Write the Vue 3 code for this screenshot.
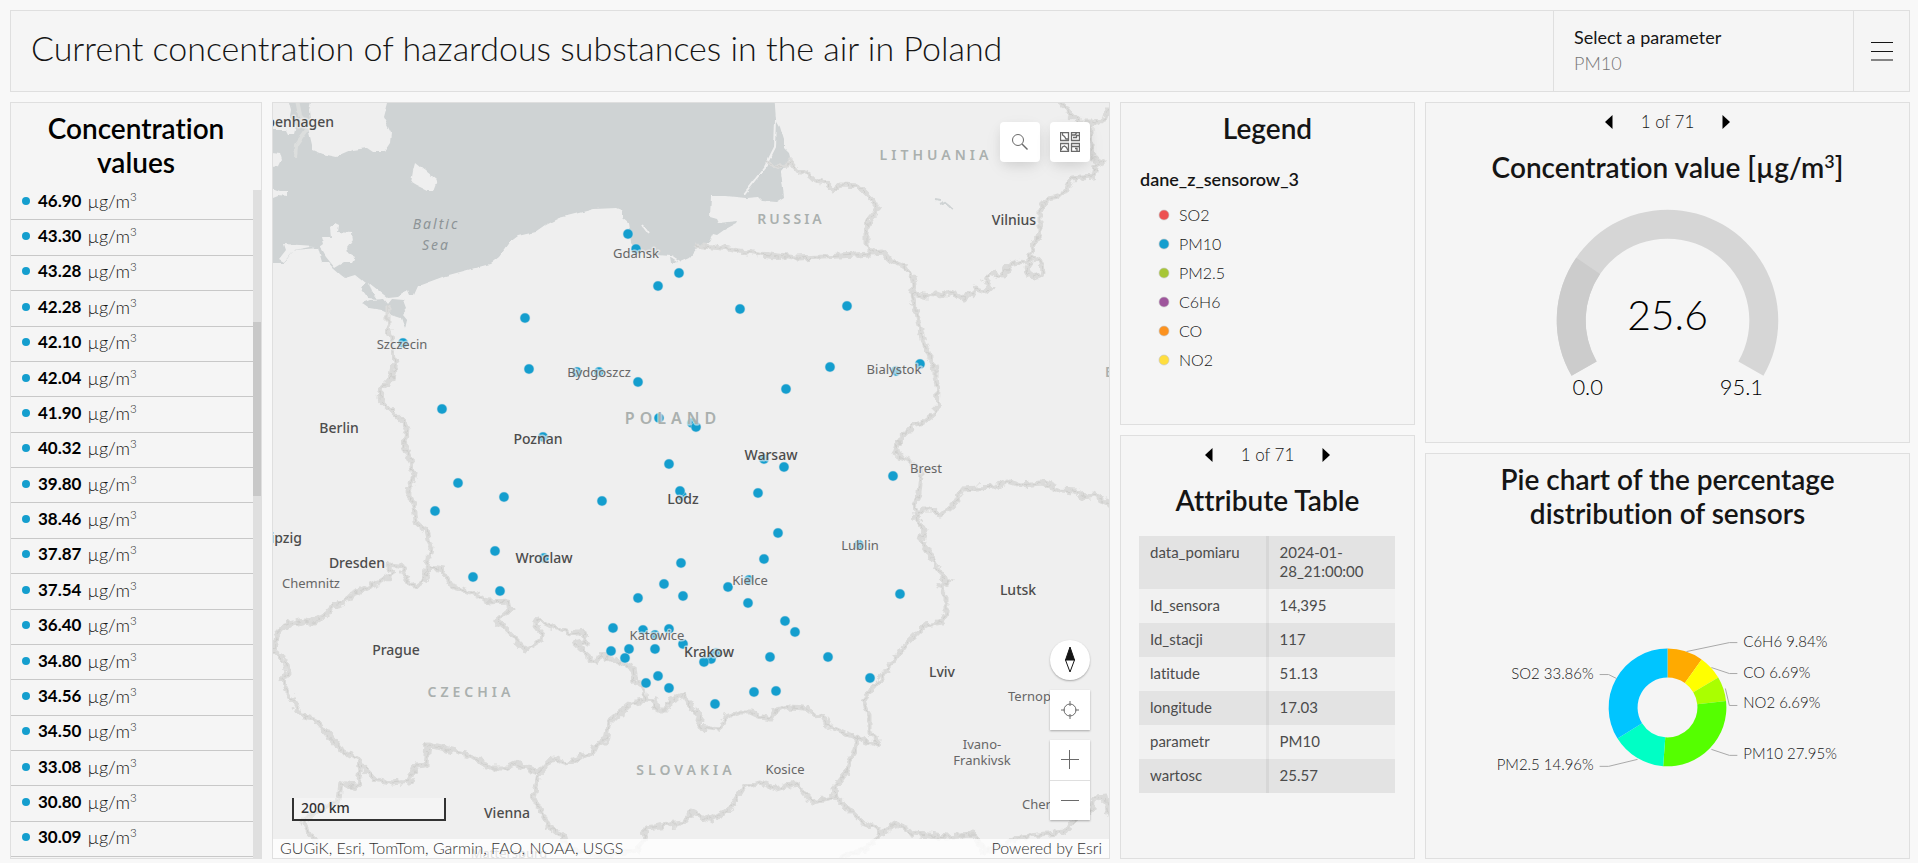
<script setup>
import { ref, computed } from 'vue'

const parameter = ref('PM10')
const parameters = ['SO2', 'PM10', 'PM2.5', 'C6H6', 'CO', 'NO2']

const values = [
  '46.90', '43.30', '43.28', '42.28', '42.10', '42.04', '41.90', '40.32', '39.80', '38.46',
  '37.87', '37.54', '36.40', '34.80', '34.56', '34.50', '33.08', '30.80', '30.09',
]

const legend = [
  { name: 'SO2', color: '#ed5151' },
  { name: 'PM10', color: '#149ece' },
  { name: 'PM2.5', color: '#a7c636' },
  { name: 'C6H6', color: '#9e559c' },
  { name: 'CO', color: '#fc921f' },
  { name: 'NO2', color: '#ffde3e' },
]

const attributes = [
  ['data_pomiaru', '2024-01-28_21:00:00'],
  ['Id_sensora', '14,395'],
  ['Id_stacji', '117'],
  ['latitude', '51.13'],
  ['longitude', '17.03'],
  ['parametr', 'PM10'],
  ['wartosc', '25.57'],
]

/* ring segment between two angles, measured clockwise from the top */
function ring(cx, cy, outer, inner, from, to) {
  const at = (r, deg) => {
    const a = ((deg - 90) * Math.PI) / 180
    return `${(cx + r * Math.cos(a)).toFixed(2)} ${(cy + r * Math.sin(a)).toFixed(2)}`
  }
  const big = to - from > 180 ? 1 : 0
  return `M${at(outer, from)}A${outer} ${outer} 0 ${big} 1 ${at(outer, to)}L${at(inner, to)}A${inner} ${inner} 0 ${big} 0 ${at(inner, from)}Z`
}

const gaugeSplit = -120 + (25.57 / 95.1) * 240
const gauge = [
  { d: ring(242, 134, 111, 82, -120, 120), color: '#d6d6d6' },
  { d: ring(242, 134, 111, 82, -120, gaugeSplit), color: '#cccccc' },
]

const shares = [
  { name: 'C6H6', share: 9.84, color: '#ffaa00', line: '261,121 304,112 312,112', x: 318, y: 116, anchor: 'start' },
  { name: 'CO', share: 6.69, color: '#ffff00', line: '286,137 304,143 312,143', x: 318, y: 147, anchor: 'start' },
  { name: 'NO2', share: 6.69, color: '#aaff00', line: '300,158 304,175 312,175', x: 318, y: 178, anchor: 'start' },
  { name: 'PM10', share: 27.95, color: '#55ff00', line: '286,219 304,225 312,225', x: 318, y: 229, anchor: 'start' },
  { name: 'PM2.5', share: 14.96, color: '#00ffc5', line: '212,229 183,236 174,236', x: 168, y: 240, anchor: 'end' },
  { name: 'SO2', share: 33.86, color: '#00c5ff', line: '191,148 183,144 174,144', x: 168, y: 148, anchor: 'end' },
]
const slices = computed(() => {
  const total = shares.reduce((s, p) => s + p.share, 0)
  let angle = 0
  return shares.map((p) => {
    const from = angle
    angle += (p.share / total) * 360
    return { ...p, d: ring(242, 177, 59, 30, from, angle) }
  })
})

const stations = [
  [628, 234], [636, 249], [679, 273], [658, 286], [740, 309], [847, 306], [830, 367], [920, 364],
  [896, 371], [577, 372], [599, 372], [638, 382], [786, 389], [659, 418], [692, 423], [696, 427],
  [669, 464], [764, 459], [784, 467], [682, 496], [680, 491], [758, 493], [602, 501], [893, 476],
  [778, 533], [859, 545], [764, 559], [681, 563], [749, 580], [664, 584], [728, 587], [638, 598],
  [683, 596], [748, 603], [900, 594], [785, 621], [795, 632], [613, 628], [643, 630], [669, 629],
  [655, 635], [611, 651], [629, 649], [625, 658], [655, 649], [683, 644], [716, 653], [711, 659],
  [704, 662], [770, 657], [828, 657], [870, 678], [658, 676], [646, 683], [669, 688], [754, 692],
  [776, 691], [715, 704], [525, 318], [403, 343], [529, 369], [442, 409], [543, 437], [458, 483],
  [504, 497], [435, 511], [495, 551], [544, 558], [473, 577], [500, 591],
]

const labels = [
  ['Copenhagen', 334, 127, 'city end'], ['Szczecin', 402, 349, 'town'], ['Bydgoszcz', 599, 377, 'town'],
  ['Berlin', 339, 433, 'city'], ['Poznan', 538, 444, 'city'], ['Leipzig', 302, 543, 'city end'],
  ['Dresden', 357, 568, 'city'], ['Chemnitz', 311, 588, 'town'], ['Wroclaw', 544, 563, 'city'],
  ['Prague', 396, 655, 'city'], ['Vienna', 507, 818, 'city'], ['Mattersburg', 509, 858, 'town'],
  ['Vilnius', 1014, 225, 'city'], ['Gdansk', 636, 258, 'town'], ['Bialystok', 894, 374, 'town'],
  ['Warsaw', 771, 460, 'city'], ['Brest', 926, 473, 'town'], ['Lodz', 683, 504, 'city'],
  ['Lublin', 860, 550, 'town'], ['Kielce', 750, 585, 'town'], ['Katowice', 657, 640, 'town'],
  ['Krakow', 709, 657, 'city'], ['Lutsk', 1018, 595, 'city'], ['Lviv', 942, 677, 'city'],
  ['Ternopil', 1008, 701, 'town start'], ['Ivano-', 982, 749, 'town'], ['Frankivsk', 982, 765, 'town'],
  ['Kosice', 785, 774, 'town'], ['Chernivtsi', 1022, 809, 'town start'],
  ['CZECHIA', 471, 697, 'country'], ['LITHUANIA', 936, 160, 'country'], ['RUSSIA', 791, 224, 'country tight'],
  ['POLAND', 673, 424, 'country home'], ['SLOVAKIA', 686, 775, 'country'], ['B', 1105, 377, 'country start'],
  ['Baltic', 436, 229, 'sea'], ['Sea', 436, 250, 'sea'],
]

const land = [
  'M311 102H387L383 117L391 133L390 143L384 152L373 152L367 148L353 150L337 157L322 154L312 150L312 145L308 128L310 120L309 110Z',
  'M272 102H289L291 110L290 116L296 126L294 134L288 134L286 130L272 130Z',
  'M272 152L280 153L282 160L279 166L272 167Z',
  'M272 188L280 191L288 191L288 196L277 195L272 197Z',
  'M415 162L426 171L437 180L433 191L428 191L416 185L411 182L413 170Z',
  'M335 223L339 225L338 232L352 233L353 240L347 248L348 253L355 257L352 262L345 262L335 268L326 257L320 247L324 244L322 237L331 237L330 227Z',
  'M284 244L315 246L294 250L284 262L279 259L286 250Z',
]

const borders = [
  'M694 245L721 248L760 254L796 258L824 257L871 254',
  'M767 163L776 167L788 166L791 161L800 172L806 172L815 180L826 183L832 189L842 185L858 186L862 190L874 202L877 210L869 220L866 233L866 245L872 253L883 252L890 260L905 266L912 277L914 285L912 293',
  'M912 293L928 297L937 293L942 295L951 292L964 299L976 289L985 292L990 287L985 279L994 273L1003 276L1010 264L1028 260L1033 247L1040 232L1040 212L1047 198L1058 196L1067 190L1071 178L1094 176L1096 167L1103 162L1092 158L1090 133L1090 122',
  'M1062 102L1069 113L1078 122L1092 122L1098 123L1105 118L1109 108',
  'M1028 260L1034 258L1042 262L1043 273L1033 277L1027 272L1030 262',
  'M912 293L917 317L924 342L935 370L935 378L938 390L937 412L924 422L912 426L901 438L895 455L912 461L921 475L919 493L915 505L917 520L924 530L921 540L933 560L942 577L949 582L939 586L946 597L946 613L942 622L926 625L905 645L883 675L864 700L869 715L869 732L878 740L876 746L858 738',
  'M917 517L921 510L933 510L940 517L956 503L962 489L994 487L1008 481L1021 485L1042 483L1060 490L1076 491L1083 497L1094 495L1110 504',
  'M858 738L846 734L830 727L824 717L815 715L805 708L789 707L776 710L771 719L762 717L751 712L739 712L726 717L719 729L699 727L701 715L690 707L685 694L671 700L667 710L656 710L655 701L646 700',
  'M646 700L644 688L635 682L633 668L621 663L603 655L594 661L576 645L587 642L583 632L573 634L551 626L537 619L535 626L543 635L541 640L526 650L508 631L497 621L510 610L508 601L488 602L477 594L463 590L451 586L443 570L431 568L424 581L416 586L408 581L400 566L388 565L394 573L382 581L351 595L345 603L333 606L326 615L314 622L304 620L286 625L276 636L274 651L286 660L288 670L282 680L292 700L302 716L314 718L339 748L359 760L361 771',
  'M361 765L377 781L392 783L410 781L416 766L426 765L428 745L449 750L469 755L490 768L506 768L516 763L539 773',
  'M361 771L357 788L341 783L339 800L318 812L302 820L310 835L322 848',
  'M539 773L553 758L567 763L592 753L596 745L606 740L610 721L631 703L646 700',
  'M539 773L534 798L545 818L551 830L563 835L566 848L600 856L638 850L644 837L646 828L683 823L692 812L710 820L731 808L744 787L760 782L776 789L796 783L812 802L835 798',
  'M858 738L847 772L835 787L836 797L862 822L878 828L881 835L896 823L912 833L946 837L974 835L984 852L1021 837L1065 832L1074 820L1092 810L1094 798L1105 797L1110 818',
  'M881 835L863 850L839 858',
  'M388 306L388 325L395 362L392 378L381 390L380 399L391 410L405 424L408 430L404 446L410 460L414 475L408 492L414 505L416 522L427 530L431 548L427 566L424 581',
]
</script>

<template>
  <div class="dashboard">
    <header class="panel header">
      <h1 class="headline">Current concentration of hazardous substances in the air in Poland</h1>
      <div class="selector">
        <label for="parameter">Select a parameter</label>
        <select id="parameter" v-model="parameter">
          <option v-for="p in parameters" :key="p">{{ p }}</option>
        </select>
      </div>
      <button class="menu" aria-label="Menu">
        <svg width="24" height="20" viewBox="0 0 24 20" stroke="#151515" fill="none">
          <path d="M1 1.5H23M1 10.5H23M1 19H23" />
        </svg>
      </button>
    </header>

    <main class="columns">
      <section class="panel readings">
        <h2 class="title strong">Concentration values</h2>
        <div class="scroller">
          <ul class="rows">
            <li v-for="v in values" :key="v">
              <span class="dot"></span>
              <b>{{ v }}</b>
              <span class="unit">µg/m<sup>3</sup></span>
            </li>
          </ul>
          <div class="track"><div class="thumb"></div></div>
        </div>
      </section>

      <section class="panel map">
        <svg class="canvas" viewBox="273 103 836 755" preserveAspectRatio="xMidYMid slice">
          <defs>
            <filter id="rough" x="-5%" y="-5%" width="110%" height="110%">
              <feTurbulence type="fractalNoise" baseFrequency="0.14" numOctaves="2" seed="4" />
              <feDisplacementMap in="SourceGraphic" scale="9" xChannelSelector="R" yChannelSelector="G" />
            </filter>
            <filter id="coast" x="-5%" y="-5%" width="110%" height="110%">
              <feTurbulence type="fractalNoise" baseFrequency="0.1" numOctaves="2" seed="8" />
              <feDisplacementMap in="SourceGraphic" scale="4" xChannelSelector="R" yChannelSelector="G" />
            </filter>
          </defs>
          <rect x="253" y="83" width="876" height="795" fill="#efefef" />
          <g filter="url(#coast)">
            <path
              fill="#cfd3d4"
              d="M262 92H774L776 120L780 127L784 140L784 148L789 153L790 157L787 165L781 172L784 197L776 202L762 201L758 197L746 198L726 196L711 196L710 217L717 219L719 223L738 221L737 223L724 230L717 235L713 234L709 242L697 248L689 258L680 262L671 263L670 256L656 255L637 251L631 242L628 223L622 218L622 210L617 208L594 209L575 214L559 218L545 225L535 232L518 236L510 242L499 257L490 264L445 276L418 286L414 295L410 295L408 290L398 297L388 298L369 283L372 292L377 299L368 298L361 288L365 283L355 275L345 278L341 275L333 268L328 262L322 262L318 248L294 250L284 263L262 263Z"
            />
            <path fill="#cfd3d4" d="M362 303L370 300L384 299L388 304L392 299L404 300L407 308L402 314L407 320L405 329L401 318L392 315L382 310L369 308Z" />
            <path d="M940 204L945 202L949 205L953 209M941 200L935 199" stroke="#cfd3d4" stroke-width="2" fill="none" />
            <path v-for="d in land" :key="d" :d="d" fill="#efefef" />
            <path d="M776 120L775 147L765 167L744 194" stroke="#efefef" stroke-width="2" fill="none" />
            <path d="M642 225L648 233M671 256L680 262" stroke="#efefef" stroke-width="2" fill="none" />
            <path d="M297 100L300 115L307 130L296 145L295 158" stroke="#dcdedd" stroke-width="4" fill="none" />
          </g>
          <g filter="url(#rough)" fill="none" stroke-linejoin="round">
            <path v-for="d in borders" :key="d" :d="d" stroke="#dbdbda" stroke-width="5" />
            <path v-for="d in borders" :key="d" :d="d" stroke="#cfcfcd" stroke-width="1" stroke-dasharray="7 3" />
          </g>
          <circle v-for="(s, i) in stations" :key="i" :cx="s[0]" :cy="s[1]" r="5" class="station" />
          <text v-for="l in labels" :key="l[0]" :x="l[1]" :y="l[2]" :class="l[3]">{{ l[0] }}</text>
        </svg>

        <div class="tools top">
          <button class="tool round" aria-label="Search">
            <svg width="18" height="18" viewBox="0 0 18 18" fill="none" stroke="#6a6a6a">
              <circle cx="7" cy="7" r="5.5" /><path d="M11 11L16.5 16.5" stroke-width="1.4" />
            </svg>
          </button>
          <button class="tool round" aria-label="Basemap gallery">
            <svg width="20" height="20" viewBox="0 0 20 20" fill="none" stroke="#6a6a6a" stroke-width="1.3">
              <path d="M.5.5h8v8h-8zM11.5.5h8v8h-8zM.5 11.5h8v8h-8zM11.5 11.5h8v8h-8z" />
              <path d="M2.500 1v2l2 1.500 1.500 2.500h2M12 3h3l1.500-2M13 5.500h3.500v-2h2.500M1 18l1.500-3 2-1 2 1.500 1.500 3M12 14.500h7M15 16.500h2v3" />
            </svg>
          </button>
        </div>

        <div class="tools bottom">
          <button class="tool compass" aria-label="Reset compass">
            <svg width="12" height="28" viewBox="0 0 12 28">
              <path d="M6 1L10.500 14H1.500Z" fill="#151515" stroke="#151515" />
              <path d="M1.500 14H10.500L6 26Z" fill="#fff" stroke="#151515" />
            </svg>
          </button>
          <button class="tool" aria-label="Find my location">
            <svg width="20" height="20" viewBox="0 0 20 20" fill="none" stroke="#6a6a6a">
              <circle cx="10" cy="10" r="6" /><path d="M10 1V6M10 14V19M1 10H5M15 10H19" />
            </svg>
          </button>
          <div class="zoom">
            <button class="tool" aria-label="Zoom in">
              <svg width="20" height="20" viewBox="0 0 20 20" stroke="#6a6a6a"><path d="M1 9.500H19M9.500 0V19" /></svg>
            </button>
            <button class="tool" aria-label="Zoom out">
              <svg width="20" height="20" viewBox="0 0 20 20" stroke="#6a6a6a"><path d="M1 9.500H19" /></svg>
            </button>
          </div>
        </div>

        <div class="scale">200 km</div>
        <div class="attribution">
          <span>GUGiK, Esri, TomTom, Garmin, FAO, NOAA, USGS</span>
          <span>Powered by <a href="#">Esri</a></span>
        </div>
      </section>

      <div class="stack middle">
        <section class="panel">
          <h2 class="title">Legend</h2>
          <h3 class="layer">dane_z_sensorow_3</h3>
          <ul class="legend">
            <li v-for="l in legend" :key="l.name">
              <svg width="12" height="12" viewBox="0 0 12 12"><circle cx="6" cy="6" r="5" :fill="l.color" stroke="#c4c4c4" stroke-opacity=".6" /></svg>
              {{ l.name }}
            </li>
          </ul>
        </section>
        <section class="panel">
          <nav class="pager">
            <button aria-label="Previous"><svg width="8" height="14" viewBox="0 0 8 14"><path d="M7.500 0V14L0 7Z" /></svg></button>
            <span>1 of 71</span>
            <button aria-label="Next"><svg width="8" height="14" viewBox="0 0 8 14"><path d="M.5 0V14L8 7Z" /></svg></button>
          </nav>
          <h2 class="title spaced">Attribute Table</h2>
          <table class="attributes">
            <tbody>
              <tr v-for="a in attributes" :key="a[0]">
                <th scope="row">{{ a[0] }}</th>
                <td>{{ a[1] }}</td>
              </tr>
            </tbody>
          </table>
        </section>
      </div>

      <div class="stack right">
        <section class="panel">
          <nav class="pager">
            <button aria-label="Previous"><svg width="8" height="14" viewBox="0 0 8 14"><path d="M7.500 0V14L0 7Z" /></svg></button>
            <span>1 of 71</span>
            <button aria-label="Next"><svg width="8" height="14" viewBox="0 0 8 14"><path d="M.5 0V14L8 7Z" /></svg></button>
          </nav>
          <h2 class="title spaced">Concentration value [µg/m<sup>3</sup>]</h2>
          <svg class="chart" viewBox="0 0 484 253">
            <path v-for="g in gauge" :key="g.color" :d="g.d" :fill="g.color" />
            <text class="reading" x="242" y="144">25.6</text>
            <text class="bound" x="162" y="209">0.0</text>
            <text class="bound" x="316" y="209">95.1</text>
          </svg>
        </section>
        <section class="panel">
          <h2 class="title">Pie chart of the percentage distribution of sensors</h2>
          <svg class="chart" viewBox="0 0 484 327">
            <path v-for="s in slices" :key="s.name" :d="s.d" :fill="s.color" />
            <g v-for="s in slices" :key="s.name">
              <polyline :points="s.line" fill="none" stroke="#a9a9a9" />
              <text class="share" :x="s.x" :y="s.y" :text-anchor="s.anchor">{{ s.name }} {{ s.share }}%</text>
            </g>
          </svg>
        </section>
      </div>
    </main>
  </div>
</template>

<style>
body {
  margin: 0;
  background: #f8f8f8;
}
</style>

<style scoped>
.dashboard {
  box-sizing: border-box;
  height: 100vh;
  padding: 10px 8px 4px 10px;
  display: flex;
  flex-direction: column;
  gap: 10px;
  font-family: Lato, "Liberation Sans", sans-serif;
  font-weight: 300;
  font-variant-ligatures: none;
  color: #151515;
}
.dashboard * {
  box-sizing: border-box;
}
button,
select {
  font: inherit;
  color: inherit;
  background: none;
  border: 0;
  padding: 0;
  margin: 0;
  border-radius: 0;
}
ul {
  list-style: none;
  margin: 0;
  padding: 0;
}
.panel {
  background: #f5f5f5;
  border: 1px solid #dfdfdf;
  min-width: 0;
  min-height: 0;
  display: flex;
  flex-direction: column;
  overflow: hidden;
}
.header {
  flex-direction: row;
  flex: none;
}
.headline {
  flex: 1;
  margin: 0;
  padding: 17px 20px 23px;
  font-size: 34px;
  line-height: 40px;
  font-weight: 300;
}
.selector {
  width: 300px;
  border-left: 1px solid #dfdfdf;
  padding: 13px 20px;
  display: flex;
  flex-direction: column;
  align-items: flex-start;
  font-size: 18px;
  line-height: 26px;
}
.selector label {
  font-weight: 400;
}
.selector select {
  appearance: none;
  width: 100%;
  height: 26px;
  color: #757575;
}
.menu {
  width: 56px;
  border-left: 1px solid #dfdfdf;
  display: grid;
  place-items: center;
}
.columns {
  flex: 1;
  min-height: 0;
  display: grid;
  grid-template-columns: 252fr 838fr 295fr 485fr;
  gap: 10px;
}
.stack {
  display: grid;
  gap: 10px;
  min-height: 0;
  min-width: 0;
}
.middle {
  grid-template-rows: 323fr 424fr;
}
.right {
  grid-template-rows: 341fr 406fr;
}
.title {
  margin: 0;
  padding: 8px 30px 0;
  font-size: 28px;
  line-height: 34px;
  font-weight: 600;
  text-align: center;
}
.title.spaced {
  padding: 0 10px;
}
.strong {
  color: #000;
}
sup {
  font-size: 64%;
  line-height: 0;
  vertical-align: super;
}

.scroller {
  flex: 1;
  min-height: 0;
  display: flex;
  padding-top: 6px;
}
.rows {
  flex: 1;
  display: flex;
  flex-direction: column;
  padding-bottom: 1px;
}
.rows li {
  flex: 1;
  min-height: 0;
  border-bottom: 1px solid #c8c8c8;
  display: flex;
  align-items: center;
  padding: 0 0 3px 11px;
  font-size: 17px;
  line-height: 24px;
}
.rows b {
  font-weight: 700;
  color: #000;
  margin: 0 6px 0 8px;
}
.unit {
  font-size: 18px;
}
.dot {
  width: 8px;
  height: 8px;
  border-radius: 50%;
  background: #149ece;
}
.track {
  width: 8px;
  margin-top: 5px;
  background: #dfdfdf;
}
.thumb {
  height: 26%;
  margin-top: 132px;
  background: #c8c8c8;
}

.map {
  position: relative;
}
.canvas {
  position: absolute;
  inset: 0;
  width: 100%;
  height: 100%;
}
.station {
  fill: #149ece;
  stroke: #c4dbe4;
  stroke-width: 0.5;
}
.canvas text {
  font-family: "Noto Sans", sans-serif;
  text-anchor: middle;
  paint-order: stroke;
  stroke: #efefef;
  stroke-opacity: 0.65;
  stroke-width: 3px;
  stroke-linejoin: round;
}
.canvas .city {
  font-size: 14px;
  font-weight: 500;
  fill: #4c4c4c;
}
.canvas .town {
  font-size: 13px;
  font-weight: 400;
  fill: #666;
}
.canvas .country {
  font-size: 14px;
  font-weight: 600;
  letter-spacing: 4px;
  fill: #aab0ae;
}
.canvas .tight {
  letter-spacing: 3px;
}
.canvas .home {
  font-size: 16px;
  letter-spacing: 5px;
}
.canvas .sea {
  font-size: 14px;
  font-style: italic;
  letter-spacing: 2px;
  font-weight: 400;
  fill: #8d9497;
  stroke: #cfd3d4;
}
.canvas .end {
  text-anchor: end;
}
.canvas .start {
  text-anchor: start;
}
.tools {
  position: absolute;
  right: 19px;
  display: flex;
  gap: 10px;
}
.tools.top {
  top: 19px;
}
.tools.bottom {
  bottom: 38px;
  flex-direction: column;
}
.tool {
  width: 40px;
  height: 40px;
  background: #fff;
  display: grid;
  place-items: center;
  box-shadow: 0 1px 2px rgba(0, 0, 0, 0.3);
}
.tool.round {
  border-radius: 4px;
  box-shadow: 0 6px 20px -4px rgba(0, 0, 0, 0.1), 0 4px 12px -2px rgba(0, 0, 0, 0.08);
}
.tool.compass {
  border-radius: 50%;
}
.zoom {
  box-shadow: 0 1px 2px rgba(0, 0, 0, 0.3);
}
.zoom .tool {
  box-shadow: none;
}
.zoom .tool + .tool {
  border-top: 1px solid #dfdfdf;
}
.scale {
  position: absolute;
  left: 19px;
  bottom: 37px;
  width: 154px;
  height: 23px;
  padding-left: 7px;
  border: solid #323232;
  border-width: 0 2px 2px;
  background: rgba(255, 255, 255, 0.33);
  color: #323232;
  font: 500 14px/20px "Noto Sans", sans-serif;
}
.attribution {
  position: absolute;
  left: 0;
  right: 0;
  bottom: 0;
  display: flex;
  justify-content: space-between;
  padding: 0 7px 2px;
  font-size: 16px;
  line-height: 17px;
  color: #323232;
  background: rgba(255, 255, 255, 0.8);
}
.attribution a {
  color: inherit;
  text-decoration: none;
}

.layer {
  margin: 22px 19px 0;
  font-size: 18px;
  line-height: 24px;
  font-weight: 600;
}
.legend {
  padding: 9px 0 0 37px;
  font-size: 16px;
  line-height: 29px;
}
.legend li {
  display: flex;
  align-items: center;
  gap: 9px;
}
.pager {
  display: flex;
  align-items: center;
  justify-content: center;
  gap: 28px;
  padding: 7px 0 16px;
  font-size: 17px;
  line-height: 24px;
}
.pager button {
  display: flex;
}
.attributes {
  margin: 19px 19px 0 18px;
  border-collapse: collapse;
  table-layout: fixed;
  font-size: 15px;
  line-height: 19px;
  color: #4c4c4c;
}
.attributes th,
.attributes td {
  padding: 7px 10px 8px 11px;
  text-align: left;
  vertical-align: top;
  font-weight: 400;
  width: 50%;
}
.attributes th {
  border-right: 3px solid #e5e5e5;
}
.attributes tr {
  background: #f1f1f1;
}
.attributes tr:nth-child(odd) {
  background: #e3e3e3;
}
.attributes tr:nth-child(odd) th {
  border-color: #d7d7d7;
}
.chart {
  flex: 1;
  min-height: 0;
  width: 100%;
}
.reading {
  font-size: 41px;
  text-anchor: middle;
}
.bound {
  font-size: 22px;
  text-anchor: middle;
}
.share {
  font-size: 15px;
  fill: #151515;
}
</style>
